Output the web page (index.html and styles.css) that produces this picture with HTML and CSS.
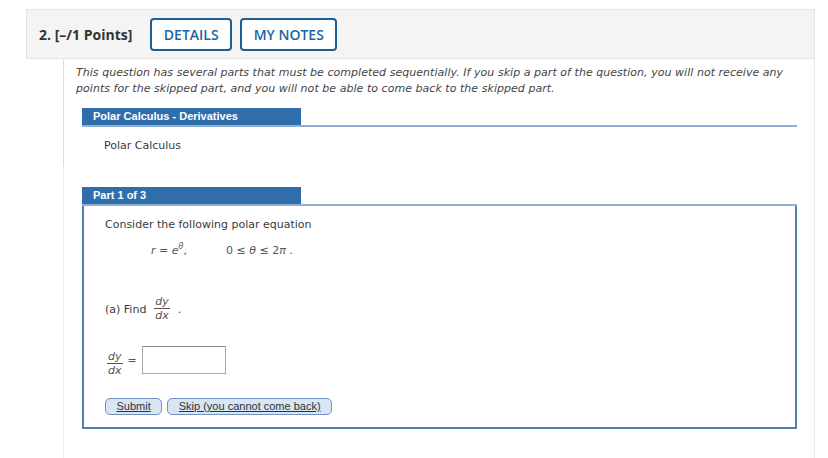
FILE: index.html
```html
<!DOCTYPE html>
<html>
<head>
<meta charset="utf-8">
<link rel="stylesheet" href="styles.css">
</head>
<body>
<div class="question">
  <div class="q-header">
    <span class="q-label"><span class="q-num">2.</span> [–/1 Points]</span>
    <span class="hbtn">DETAILS</span>
    <span class="hbtn">MY NOTES</span>
  </div>
  <div class="q-body">
    <div class="topmark"></div>
    <p class="intro">This question has several parts that must be completed sequentially. If you skip a part of the question, you will not receive any points for the skipped part, and you will not be able to come back to the skipped part.</p>
    <div class="section">
      <div class="tabline"><div class="tab">Polar Calculus - Derivatives</div></div>
      <p class="plain">Polar Calculus</p>
    </div>
    <div class="section part">
      <div class="tabline"><div class="tab">Part 1 of 3</div></div>
      <div class="partbox">
        <p class="plain">Consider the following polar equation</p>
        <div class="eqline">
          <span class="eq1"><i>r</i> = <i>e</i><sup><i>θ</i></sup>,</span>
          <span class="eq2">0 ≤ <i>θ</i> ≤ 2<i>π</i> .</span>
        </div>
        <div class="findline">
          <span>(a) Find</span>
          <span class="frac"><span class="num">dy</span><span class="den">dx</span></span>
          <span>.</span>
        </div>
        <div class="answerline">
          <span class="frac small"><span class="num">dy</span><span class="den">dx</span></span>
          <span class="eqsign">=</span>
          <span class="inputbox"></span>
        </div>
        <div class="btnrow">
          <span class="sbtn">Submit</span>
          <span class="sbtn">Skip (you cannot come back)</span>
        </div>
      </div>
    </div>
  </div>
</div>
</body>
</html>
```

FILE: styles.css
```css
html, body {
  margin: 0;
  padding: 0;
  background: #ffffff;
  height: 100%;
}
body {
  font-family: "DejaVu Sans", Verdana, sans-serif;
  color: #3a3a3a;
  overflow: hidden;
}
.question {
  margin: 9px 0 0 26px;
  width: 789px;
  height: 449px;
  display: flex;
  flex-direction: column;
}
.q-header {
  height: 48px;
  background: #f4f4f4;
  border: 1px solid #e4e4e4;
  display: flex;
  align-items: center;
  padding-left: 12px;
  font-family: "Open Sans", sans-serif;
}
.q-label {
  font-weight: 700;
  font-size: 14px;
  color: #333333;
  margin-right: 18px;
}
.hbtn {
  box-sizing: border-box;
  height: 33px;
  border: 2px solid #1d5f95;
  border-radius: 4px;
  color: #1d64a3;
  font-weight: 600;
  font-size: 14px;
  display: flex;
  align-items: center;
  padding: 0 11.5px;
  margin-right: 8px;
  background: #ffffff;
}
.q-body {
  position: relative;
  flex: 1;
  margin-left: 37px;
  border-left: 1px solid #efefef;
  border-right: 1px solid #ececec;
  border-top: 1px solid #e4e4e4;
  margin-top: -1px;
  padding-top: 6px;
}
.topmark {
  position: absolute;
  left: -1px;
  top: 0;
  width: 1px;
  height: 107px;
  background: #dcdcdc;
}
.intro {
  margin: 0;
  padding: 0 18px 0 12px;
  font-style: italic;
  font-size: 11px;
  line-height: 16px;
  letter-spacing: 0.04px;
  color: #444444;
}
.section {
  margin: 11px 17px 0 18px;
}
.section.part {
  margin-top: 33px;
}
.tabline {
  border-bottom: 2px solid #8db0d6;
}
.tab {
  width: 208px;
  height: 17px;
  line-height: 17px;
  background: #2f6eab;
  color: #ffffff;
  font-family: "Liberation Sans", Arial, sans-serif;
  font-weight: 700;
  font-size: 11px;
  padding-left: 11px;
}
.plain {
  margin: 11px 0 0 22px;
  font-size: 11px;
  line-height: 16px;
  color: #3a3a3a;
}
.partbox {
  border: 2px solid #4f7fb6;
  border-top: none;
  padding: 11px 0 12px 0;
}
.partbox .plain {
  margin: 0 0 0 21px;
}
.eqline {
  margin: 10px 0 0 67px;
  font-size: 11px;
  line-height: 16px;
  color: #555555;
  display: flex;
}
.eq1 {
  width: 75px;
}
sup {
  font-size: 8px;
  vertical-align: 5px;
  line-height: 0;
}
.findline {
  margin: 36px 0 0 21px;
  display: flex;
  align-items: center;
  gap: 8px;
  font-size: 11px;
  color: #3a3a3a;
}
.frac {
  display: inline-flex;
  flex-direction: column;
  align-items: center;
  font-style: italic;
  color: #555555;
  font-size: 11px;
}
.frac .num {
  border-bottom: 1px solid #555555;
  padding: 0 1px;
  line-height: 13px;
}
.frac .den {
  line-height: 14px;
}
.answerline {
  margin: 19px 0 0 23px;
  display: flex;
  align-items: center;
  gap: 5px;
  font-size: 11px;
}
.frac.small {
  margin-top: 8px;
}
.eqsign {
  color: #555555;
}
.inputbox {
  box-sizing: border-box;
  width: 84px;
  height: 28px;
  border: 1px solid #a9a9a9;
  border-top-color: #8f8f8f;
  background: #ffffff;
}
.btnrow {
  margin: 20px 0 0 21px;
  display: flex;
  gap: 5px;
}
.sbtn {
  box-sizing: border-box;
  height: 17px;
  line-height: 15px;
  padding: 0 10.5px;
  background: #d9e5f1;
  border: 1px solid #6e93c0;
  border-radius: 5px;
  font-family: "Liberation Sans", Arial, sans-serif;
  font-size: 11px;
  color: #2b3440;
  text-decoration: underline;
}
```
